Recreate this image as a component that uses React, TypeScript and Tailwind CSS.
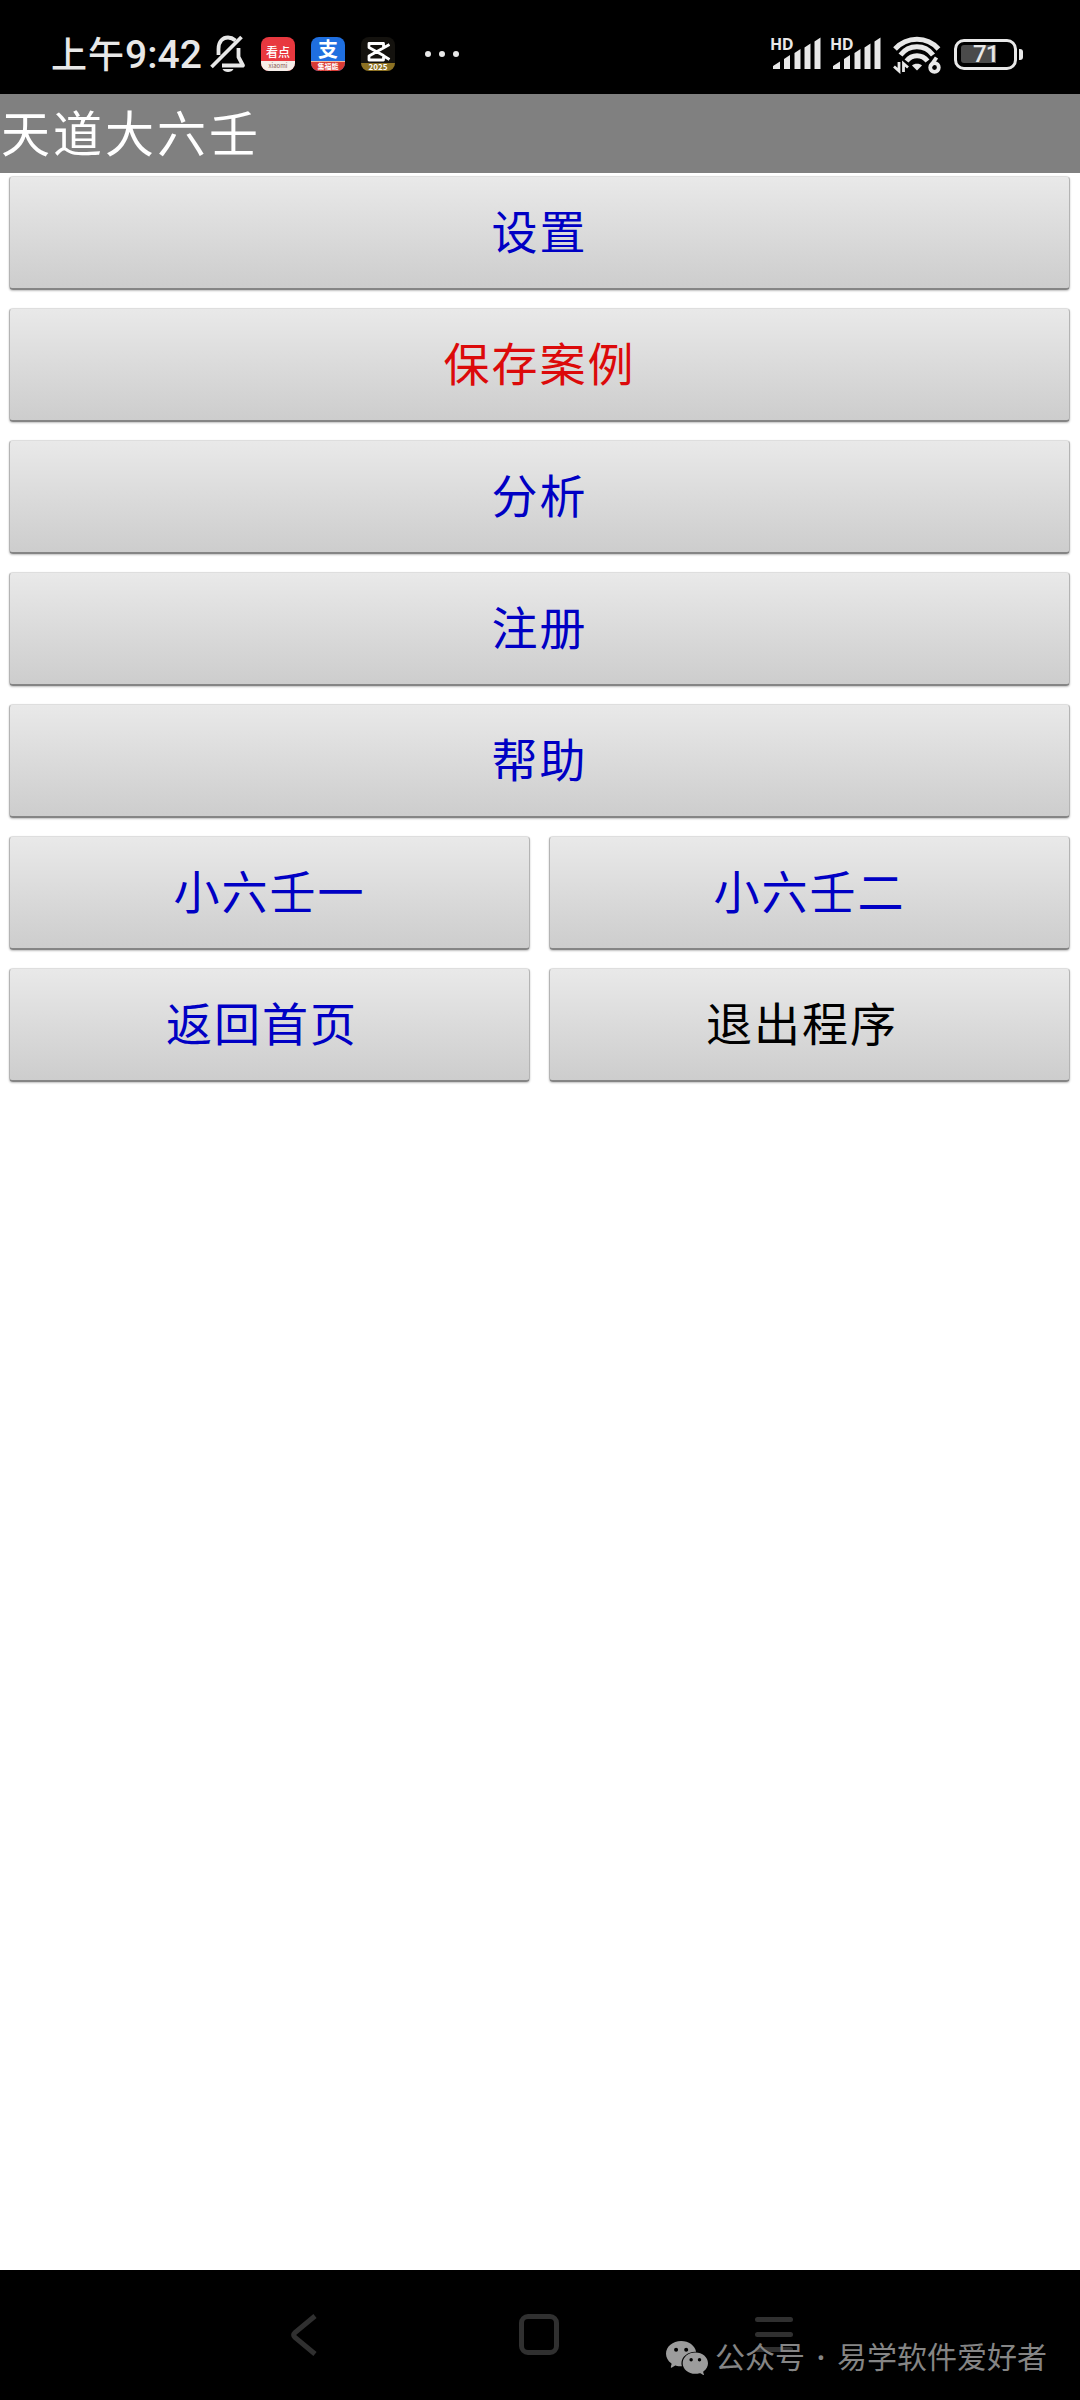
import { IoLogoWechat } from 'react-icons/io5';

type MenuItem = {
  label: string;
  color?: string;
  offset?: string;
};

const FULL_ROWS: MenuItem[] = [
  { label: '设置' },
  { label: '保存案例', color: 'text-[#dc0a0a]' },
  { label: '分析' },
  { label: '注册' },
  { label: '帮助' },
];

const HALF_ROWS: MenuItem[] = [
  { label: '小六壬一' },
  { label: '小六壬二' },
  { label: '返回首页', offset: 'pr-[15px]' },
  { label: '退出程序', color: 'text-black', offset: 'pr-[15px]' },
];

function MenuButton({ label, color = 'text-[#0000c4]', offset = '' }: MenuItem) {
  return (
    <button
      type="button"
      className={`flex h-[114px] w-full items-center justify-center rounded-[4px] border border-x-[#b4b4b4] border-t-[#dedede] border-b-2 border-b-[#858585] bg-linear-to-b from-[#e9e9e9] to-[#cdcdcd] text-[46px] leading-none tracking-[2px] shadow-[0_1px_2px_rgba(0,0,0,0.25)] ${color} ${offset}`}
    >
      <span className="pb-[7px]">{label}</span>
    </button>
  );
}

function MutedBellIcon() {
  return (
    <svg viewBox="0 0 36 38" className="h-[38px] w-[36px]" fill="none" stroke="#e8e8e8" strokeWidth="3.8">
      <path d="M8.500 20V14C8.500 6 13 2.500 18 2.500c3 0 5 1 7.500 3" />
      <path d="M28.500 13v9l4.500 8.500H12" strokeLinejoin="round" />
      <path d="M1.500 32L31.500 2" />
      <path d="M12.500 34h11c-1.500 4-9.500 4-11 0z" fill="#e8e8e8" stroke="none" />
    </svg>
  );
}

function KandianIcon() {
  return (
    <div className="flex h-[34px] w-[34px] flex-col overflow-hidden rounded-[8px] bg-[#e8383f] text-center text-white">
      <span className="h-[24px] pt-[8px] text-[12px] leading-[13px] font-medium">看点</span>
      <span className="h-[10px] bg-[#f6eeea] text-[6px] leading-[9px] text-[#8a5a52]">xiaomi</span>
    </div>
  );
}

function AlipayIcon() {
  return (
    <div className="flex h-[34px] w-[34px] flex-col rounded-[8px] bg-[#1f6fe0] text-center text-white">
      <span className="h-[24px] text-[20px] leading-[24px] font-bold">支</span>
      <span className="h-[10px] rounded-b-[8px] border-t border-[#f3b9a0] bg-[#d93a34] text-[7px] leading-[8px] font-bold">
        集福能
      </span>
    </div>
  );
}

function CapcutIcon() {
  return (
    <div className="flex h-[34px] w-[34px] flex-col overflow-hidden rounded-[8px] bg-[#14120e]">
      <svg viewBox="0 0 34 26" className="h-[26px] w-[34px]" fill="none" stroke="#fff" strokeWidth="2.800">
        <path d="M28.500 7.500L8 19v4h14.500V18.500L8 10.500V6.500h14.500v4M28.500 22.500L22 18.500" strokeLinejoin="round" />
      </svg>
      <span className="h-[8px] bg-[#8d7223] text-center text-[8px] leading-[8px] font-bold text-white">2025</span>
    </div>
  );
}

function SignalIcon() {
  return (
    <div className="relative h-[36px] w-[50px]">
      <span className="absolute top-0 left-[-1px] font-['Open_Sans'] text-[16px] leading-[16px] font-bold tracking-[-0.5px]">
        HD
      </span>
      <svg viewBox="0 0 50 36" className="h-[36px] w-[50px]" fill="#e8e8e8">
        <path d="M2 30l7-4.500v7.500H2zM13 23l6-4v14h-6zM23.500 17l6-4v20h-6zM33.500 11.500l6-4V33h-6zM43.500 5.500l6-4V33h-6z" />
      </svg>
    </div>
  );
}

function WifiIcon() {
  return (
    <svg viewBox="0 0 48 38" className="h-[38px] w-[48px]" fill="none" stroke="#e8e8e8" strokeWidth="5">
      <path d="M2 13C14 0 34 0 45.500 13" />
      <path d="M7.500 19C16 8 32 8 40 19" />
      <path d="M13.500 25C19 18 29 18 34.500 25" />
      <path d="M19 29.500c2-2.500 8-2.500 10 0l-5 5z" fill="#e8e8e8" stroke="none" />
      <path d="M6 26V35L1 30.500M10.500 36V27.500l4.500 4" strokeWidth="2.800" />
      <circle cx="41.500" cy="31.500" r="4.300" strokeWidth="3.800" />
      <path d="M43.500 21.500L38 29.500" strokeWidth="3.800" />
    </svg>
  );
}

function BatteryIcon() {
  return (
    <div className="flex items-center">
      <div className="flex h-[31px] w-[63px] items-center rounded-[10px] border-[3px] border-[#e8e8e8] p-[4px]">
        <div className="relative h-[18px] w-[35px] rounded-l-[3px] bg-[#4a4a4a]">
          <span className="absolute top-[-1px] left-[12px] font-[Roboto] text-[24px] leading-[20px] font-medium tracking-[-1px]">
            71
          </span>
        </div>
      </div>
      <div className="ml-[2px] h-[11px] w-[4px] rounded-r-[3px] bg-[#e8e8e8]" />
    </div>
  );
}

function StatusBar() {
  return (
    <header className="flex h-[94px] items-center bg-black pt-[14px] pl-[51px] text-[#e8e8e8]">
      <div className="flex w-[152px] items-baseline pb-[2px] text-[36px] leading-[44px] font-medium whitespace-nowrap">
        <span className="tracking-[1px]">上午</span>
        <span className="font-[Roboto] text-[39px]">9:42</span>
      </div>
      <span className="ml-[7px]">
        <MutedBellIcon />
      </span>
      <div className="ml-[15px] flex gap-[16px]">
        <KandianIcon />
        <AlipayIcon />
        <CapcutIcon />
      </div>
      <div className="ml-[30px] flex gap-[8px]">
        <i className="size-[6px] rounded-full bg-[#e8e8e8]" />
        <i className="size-[6px] rounded-full bg-[#e8e8e8]" />
        <i className="size-[6px] rounded-full bg-[#e8e8e8]" />
      </div>
      <div className="ml-auto flex items-center pr-[57px]">
        <SignalIcon />
        <span className="ml-[10px]">
          <SignalIcon />
        </span>
        <span className="ml-[12px] pt-[2px]">
          <WifiIcon />
        </span>
        <span className="ml-[13px]">
          <BatteryIcon />
        </span>
      </div>
    </header>
  );
}

function NavigationBar() {
  return (
    <footer className="relative h-[130px] bg-black">
      <div className="flex pt-[44px] pl-[290px]">
        <svg viewBox="0 0 28 42" className="h-[42px] w-[28px]" fill="none" stroke="#303030" strokeWidth="5">
          <path d="M25 2L5 18.500q-2.500 2.500 0 5L25 40" />
        </svg>
        <div className="ml-[201px] h-[41px] w-[40px] rounded-[9px] border-[5px] border-[#303030]" />
        <div className="ml-[196px] flex flex-col gap-[10px] pt-[3px]">
          <i className="h-[5px] w-[38px] rounded-full bg-[#303030]" />
          <i className="h-[5px] w-[38px] rounded-full bg-[#303030]" />
          <i className="h-[5px] w-[38px] rounded-full bg-[#303030]" />
        </div>
      </div>
      {/* account watermark floats over the system keys */}
      <div className="absolute top-[65px] left-[666px] flex items-center text-[#858585]">
        <IoLogoWechat className="size-[42px] text-[#9c9c9c]" />
        <div className="ml-[7px] flex pb-[3px] text-[30px] leading-[40px]">
          <span>公众号</span>
          <span className="w-[32px] pt-[3px] text-center font-['Noto_Sans'] font-semibold">·</span>
          <span>易学软件爱好者</span>
        </div>
      </div>
    </footer>
  );
}

export default function App() {
  return (
    <div className="flex h-[2400px] w-[1080px] flex-col bg-white font-['Noto_Sans_CJK_SC',sans-serif]">
      <StatusBar />
      <h1 className="h-[79px] bg-[#808080] pl-px text-[49px] leading-[73px] tracking-[3px] text-white">天道大六壬</h1>
      <main className="flex grow flex-col gap-[18px] pt-[3px] pr-[10px] pl-[9px]">
        {FULL_ROWS.map((item) => (
          <MenuButton key={item.label} {...item} />
        ))}
        <div className="grid grid-cols-2 gap-x-[19px] gap-y-[18px]">
          {HALF_ROWS.map((item) => (
            <MenuButton key={item.label} {...item} />
          ))}
        </div>
      </main>
      <NavigationBar />
    </div>
  );
}
